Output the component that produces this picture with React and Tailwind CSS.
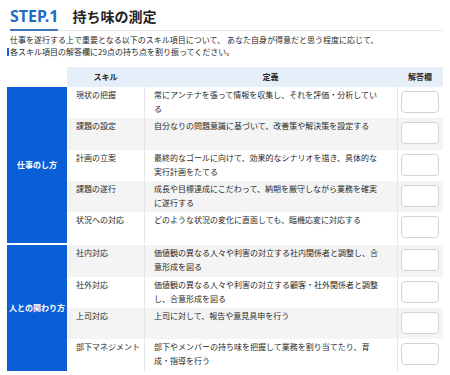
import React from 'react';

const groups = [
  {
    label: '仕事のし方',
    rows: [
      ['現状の把握', '常にアンテナを張って情報を収集し、それを評価・分析している'],
      ['課題の設定', '自分なりの問題意識に基づいて、改善策や解決策を設定する'],
      ['計画の立案', '最終的なゴールに向けて、効果的なシナリオを描き、具体的な実行計画をたてる'],
      ['課題の遂行', '成長や目標達成にこだわって、納期を厳守しながら業務を確実に遂行する'],
      ['状況への対応', 'どのような状況の変化に直面しても、臨機応変に対応する'],
    ],
  },
  {
    label: '人との関わり方',
    rows: [
      ['社内対応', '価値観の異なる人々や利害の対立する社内関係者と調整し、合意形成を図る'],
      ['社外対応', '価値観の異なる人々や利害の対立する顧客・社外関係者と調整し、合意形成を図る'],
      ['上司対応', '上司に対して、報告や意見具申を行う'],
      ['部下マネジメント', '部下やメンバーの持ち味を把握して業務を割り当てたり、育成・指導を行う'],
    ],
  },
];

export default function App() {
  let rowIndex = 0;

  return (
    <div className="h-[375px] w-[450px] overflow-hidden bg-white font-['Noto_Sans_CJK_JP','Noto_Sans',sans-serif] text-[#2a2a2a]">
      <div className="pl-[10px] pr-[7px] pt-[2px]">
        <div className="flex h-[27px] items-center gap-[14px]">
          <span className="font-['Noto_Sans','Noto_Sans_CJK_JP',sans-serif] text-[16px] font-bold leading-none text-[#1f6dc4]">
            STEP.1
          </span>
          <span className="text-[14px] font-bold leading-none text-[#222]">持ち味の測定</span>
        </div>
        <div className="flex items-end">
          <div className="h-[2px] w-[48px] bg-[#3b78c0]" />
          <div className="h-px flex-1 bg-[#e4e4e4]" />
        </div>
        <div className="mt-[3px] text-[8px] leading-[12px]">
          <p>仕事を遂行する上で重要となる以下のスキル項目について、 あなた自身が得意だと思う程度に応じて、</p>
          <p className="flex items-center">
            <span className="-ml-[3px] mr-px h-[8px] w-[2px] bg-[#1a5fd0]" />
            各スキル項目の解答欄に29点の持ち点を割り振ってください。
          </p>
        </div>
      </div>

      <div className="ml-[7px] mt-[9px] w-[436px] text-[8px]">
        <div className="flex h-[20px] font-bold">
          <div className="w-[60px]" />
          <div className="flex w-[77px] items-center justify-center bg-[#e5eef9]">スキル</div>
          <div className="flex w-[253px] items-center justify-center bg-[#e5eef9]">定義</div>
          <div className="flex w-[46px] items-center justify-center bg-[#e5eef9]">解答欄</div>
        </div>

        {groups.map((group, gi) => (
          <div key={group.label} className={`flex ${gi > 0 ? 'mt-[2px]' : ''}`}>
            <div className="flex w-[60px] items-center justify-center bg-[#0b5fd6] font-bold text-white">
              {group.label}
            </div>
            <div className="flex flex-col">
              {group.rows.map(([skill, definition]) => {
                const striped = rowIndex++ % 2 === 1;
                return (
                  <div
                    key={skill}
                    className={`flex h-[31.3px] ${striped ? 'bg-[#f4f4f4]' : 'bg-white'}`}
                  >
                    <div className="w-[77px] pl-[9px] pt-[1px] leading-[14px]">{skill}</div>
                    <div className="w-[253px] border-l border-[#e6e6e6] pl-[9px] pr-[17px] pt-[1px] leading-[14px]">
                      {definition}
                    </div>
                    <div className="w-[46px] border-l border-[#e6e6e6] pl-[3px] pt-[4px]">
                      <div className="h-[22px] w-[38px] rounded-[4px] border border-[#d2d2d2] bg-white" />
                    </div>
                  </div>
                );
              })}
            </div>
          </div>
        ))}
      </div>
    </div>
  );
}
